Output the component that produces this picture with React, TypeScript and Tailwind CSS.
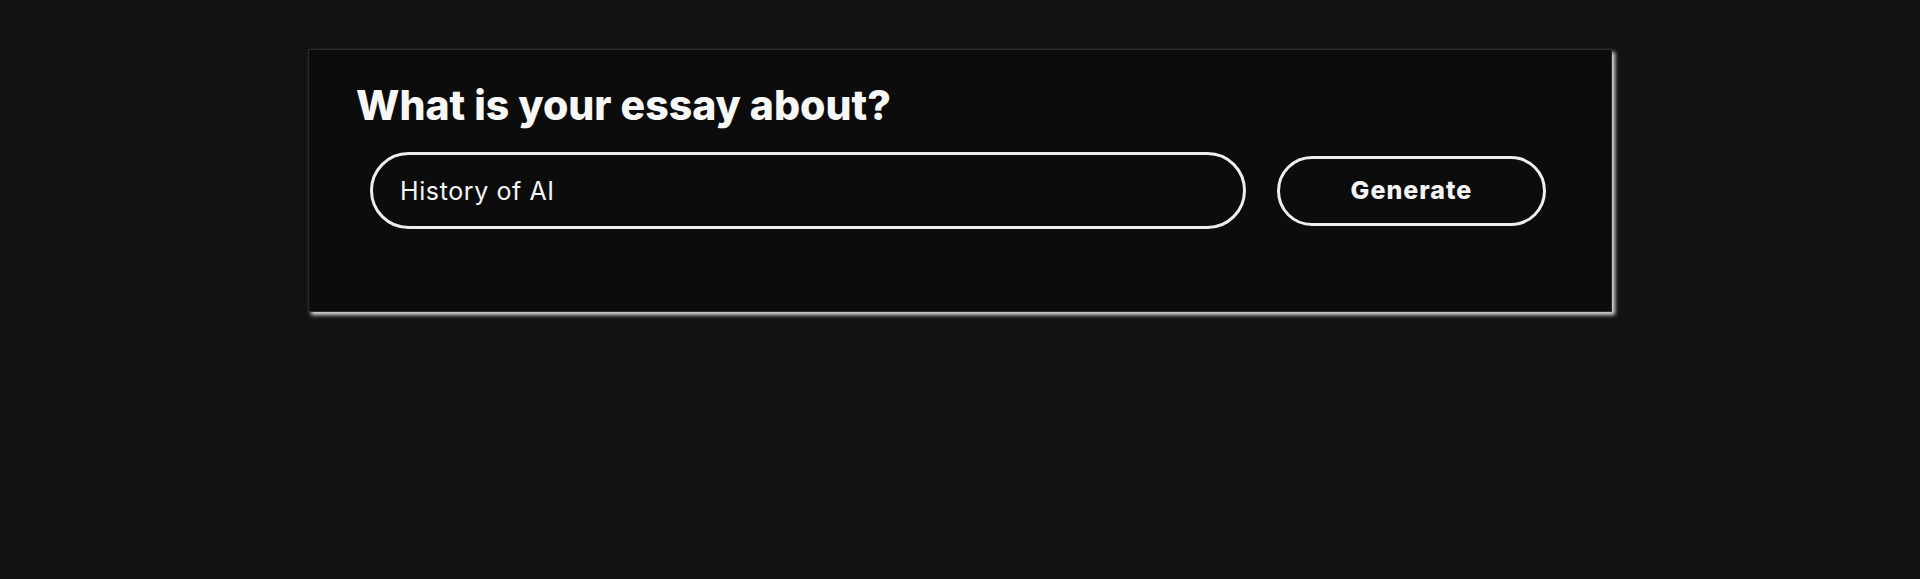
import React, { useState } from "react";

function EssayPrompt() {
  const [topic, setTopic] = useState("History of AI");

  return (
    <div className="w-[1304px] mx-auto bg-[#0c0c0c] border border-[#2c2c2c] shadow-[3px_3px_4px_#dcdcdc] pl-[47px] pt-[30px] pb-[82px]">
      <h1 className="text-[41px] leading-[50px] font-extrabold text-[#f7f7f5]">
        What is your essay about?
      </h1>
      <form
        onSubmit={(e) => e.preventDefault()}
        className="flex items-center mt-[22px] ml-[14px]"
      >
        <input
          type="text"
          value={topic}
          onChange={(e) => setTopic(e.target.value)}
          className="w-[876px] h-[77px] rounded-full border-[3px] border-[#eeeeee] bg-[#0c0c0c] pl-[27px] text-[25px] tracking-[0.6px] text-[#f4f4f4] outline-none"
        />
        <button
          type="submit"
          className="ml-[31px] w-[269px] h-[70px] rounded-full border-[3px] border-[#eeeeee] text-[25px] font-extrabold tracking-[1px] text-[#f4f4f4]"
        >
          Generate
        </button>
      </form>
    </div>
  );
}

export default function App() {
  return (
    <div
      className="min-h-[579px] bg-[#121212] pt-[49px]"
      style={{ fontFamily: "Inter, 'Liberation Sans', sans-serif" }}
    >
      <EssayPrompt />
    </div>
  );
}
